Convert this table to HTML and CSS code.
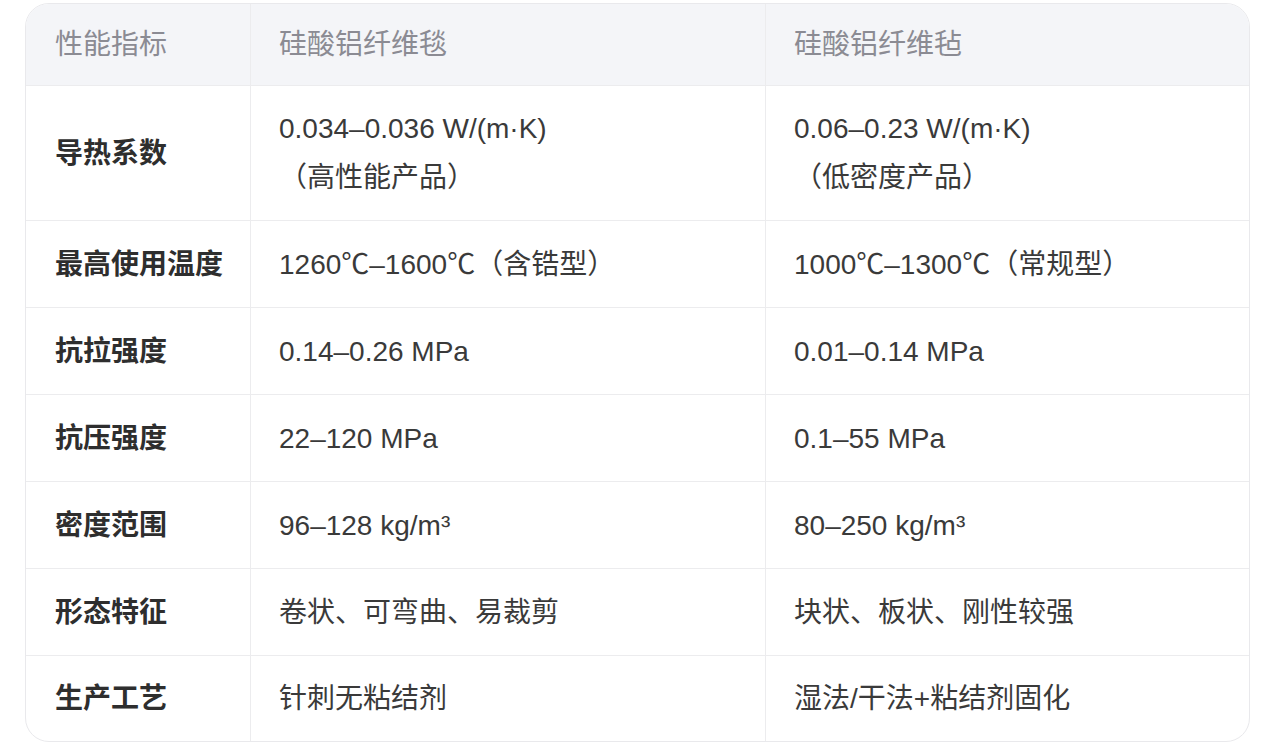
FILE: index.html
```html
<!DOCTYPE html>
<html lang="zh">
<head>
<meta charset="utf-8">
<link rel="stylesheet" href="styles.css">
</head>
<body>
<div class="wrap">
  <table class="spec">
    <colgroup>
      <col class="c1">
      <col class="c2">
      <col class="c3">
    </colgroup>
    <thead>
      <tr><th>性能指标</th><th>硅酸铝纤维毯</th><th>硅酸铝纤维毡</th></tr>
    </thead>
    <tbody>
      <tr><td class="k">导热系数</td><td>0.034–0.036 W/(m·K)<br>（高性能产品）</td><td>0.06–0.23 W/(m·K)<br>（低密度产品）</td></tr>
      <tr><td class="k">最高使用温度</td><td>1260℃–1600℃（含锆型）</td><td>1000℃–1300℃（常规型）</td></tr>
      <tr><td class="k">抗拉强度</td><td>0.14–0.26 MPa</td><td>0.01–0.14 MPa</td></tr>
      <tr><td class="k">抗压强度</td><td>22–120 MPa</td><td>0.1–55 MPa</td></tr>
      <tr><td class="k">密度范围</td><td>96–128 kg/m³</td><td>80–250 kg/m³</td></tr>
      <tr><td class="k">形态特征</td><td>卷状、可弯曲、易裁剪</td><td>块状、板状、刚性较强</td></tr>
      <tr><td class="k">生产工艺</td><td>针刺无粘结剂</td><td>湿法/干法+粘结剂固化</td></tr>
    </tbody>
  </table>
</div>
</body>
</html>
```

FILE: styles.css
```css
html, body {
  margin: 0;
  padding: 0;
  background: #ffffff;
}
body {
  font-family: "Liberation Sans", "Noto Sans CJK SC", sans-serif;
  font-size: 28px;
  color: #333333;
}
.wrap {
  padding: 3px 21px 0 25px;
}
.spec {
  width: 1225px;
  table-layout: fixed;
  border-collapse: separate;
  border-spacing: 0;
  border: 1px solid #e9e9ec;
  border-radius: 24px;
  overflow: hidden;
}
.c1 { width: 224px; }
.c2 { width: 515px; }
.c3 { width: 484px; }
.spec th,
.spec td {
  text-align: left;
  vertical-align: middle;
  padding: 0 28px 0 28px;
  line-height: 49px;
  border-bottom: 1px solid #ececee;
  border-left: 1px solid #ececee;
}
.spec th:first-child,
.spec td:first-child {
  border-left: none;
  padding-left: 29px;
  padding-right: 10px;
  white-space: nowrap;
}
.spec tbody tr:last-child td {
  border-bottom: none;
}
.spec th {
  background: #f4f5f8;
  color: #8b8b93;
  font-weight: normal;
  height: 81px;
}
.spec td {
  height: 86px;
  color: #3a3a3a;
}
.spec tbody tr:first-child td {
  height: 134px;
}
.spec tbody tr:last-child td {
  height: 85px;
}
.spec td.k {
  font-weight: bold;
  color: #2e2e2e;
}
```
